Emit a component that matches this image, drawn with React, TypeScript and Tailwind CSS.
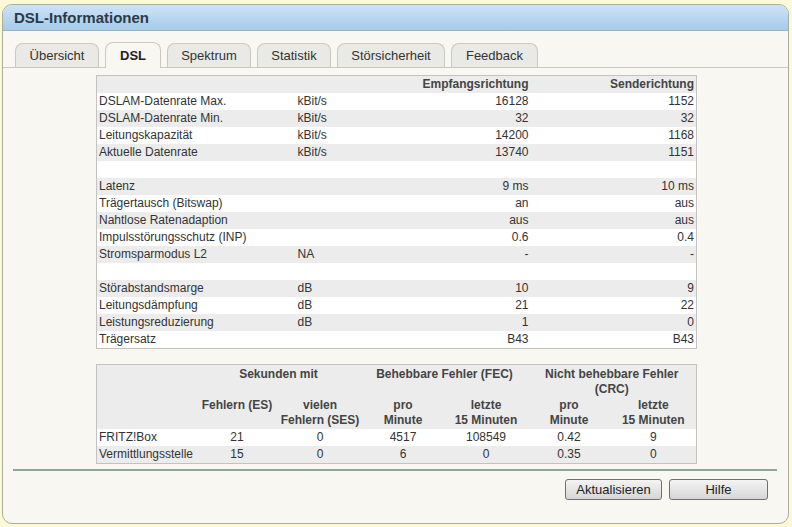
import React from "react";

const font = { fontFamily: '"Liberation Sans", Arial, sans-serif' };

type Row = { label: string; unit: string; rx: string; tx: string } | null;

const rows1: Row[] = [
  { label: "DSLAM-Datenrate Max.", unit: "kBit/s", rx: "16128", tx: "1152" },
  { label: "DSLAM-Datenrate Min.", unit: "kBit/s", rx: "32", tx: "32" },
  { label: "Leitungskapazität", unit: "kBit/s", rx: "14200", tx: "1168" },
  { label: "Aktuelle Datenrate", unit: "kBit/s", rx: "13740", tx: "1151" },
  null,
  { label: "Latenz", unit: "", rx: "9 ms", tx: "10 ms" },
  { label: "Trägertausch (Bitswap)", unit: "", rx: "an", tx: "aus" },
  { label: "Nahtlose Ratenadaption", unit: "", rx: "aus", tx: "aus" },
  { label: "Impulsstörungsschutz (INP)", unit: "", rx: "0.6", tx: "0.4" },
  { label: "Stromsparmodus L2", unit: "NA", rx: "-", tx: "-" },
  null,
  { label: "Störabstandsmarge", unit: "dB", rx: "10", tx: "9" },
  { label: "Leitungsdämpfung", unit: "dB", rx: "21", tx: "22" },
  { label: "Leistungsreduzierung", unit: "dB", rx: "1", tx: "0" },
  { label: "Trägersatz", unit: "", rx: "B43", tx: "B43" },
];

const tabs = [
  { name: "Übersicht", w: "w-[84px]" },
  { name: "DSL", w: "w-[56px]", active: true },
  { name: "Spektrum", w: "w-[84px]" },
  { name: "Statistik", w: "w-[74px]" },
  { name: "Störsicherheit", w: "w-[108px]" },
  { name: "Feedback", w: "w-[87px]" },
];

const errRows = [
  ["FRITZ!Box", "21", "0", "4517", "108549", "0.42", "9"],
  ["Vermittlungsstelle", "15", "0", "6", "0", "0.35", "0"],
];

export default function App() {
  return (
    <div className="w-[792px] h-[527px] bg-[#fcf9d6] pt-[4px] pl-[2px] text-[#333333]" style={font}>
      <div className="w-[787px] h-[520px] rounded-[10px] border border-[#a9ae9e] bg-[#f8f7f2] overflow-hidden flex flex-col">
        <div className="h-[26px] shrink-0 bg-gradient-to-b from-[#cde3f5] to-[#a6cbeb] border-b border-[#9db3c2] flex items-center pl-[11px]">
          <span className="text-[15px] font-bold text-[#2b3a48] leading-none">DSL-Informationen</span>
        </div>

        <div className="mt-[11px] flex items-end gap-[6px] pl-[12px] border-b border-[#c9c9c1] h-[26px] shrink-0">
          {tabs.map((t) =>
            t.active ? (
              <div
                key={t.name}
                className={`${t.w} h-[26px] -mb-px rounded-t-[8px] border border-b-0 border-[#c9c9c1] bg-[#f8f7f2] flex items-center justify-center text-[13px] font-bold text-[#222222]`}
              >
                {t.name}
              </div>
            ) : (
              <div
                key={t.name}
                className={`${t.w} h-[24px] rounded-t-[8px] border border-b-0 border-[#c9c9c1] bg-[#e9e9e5] flex items-center justify-center text-[13px] text-[#333333]`}
              >
                {t.name}
              </div>
            )
          )}
        </div>

        <div className="ml-[93px] mt-[7px]">
          <table className="w-[600px] table-fixed border-collapse border border-[#c2c2c2] text-[12px] leading-[17px]">
            <colgroup>
              <col className="w-[201px]" />
              <col className="w-[100px]" />
              <col className="w-[134px]" />
              <col className="w-[165px]" />
            </colgroup>
            <thead>
              <tr className="bg-[#ececec] h-[17px]">
                <th className="p-0" />
                <th className="p-0" />
                <th className="p-0 pr-[3px] text-right font-bold text-[#444444]">Empfangsrichtung</th>
                <th className="p-0 pr-[2px] text-right font-bold text-[#444444]">Senderichtung</th>
              </tr>
            </thead>
            <tbody>
              {rows1.map((r, i) => (
                <tr key={i} className={`h-[17px] ${i % 2 === 1 ? "bg-[#ececec]" : "bg-white"}`}>
                  <td className="p-0 pl-[2px] whitespace-nowrap">{r ? r.label : "\u00a0"}</td>
                  <td className="p-0">{r ? r.unit : ""}</td>
                  <td className="p-0 pr-[3px] text-right">{r ? r.rx : ""}</td>
                  <td className="p-0 pr-[2px] text-right">{r ? r.tx : ""}</td>
                </tr>
              ))}
            </tbody>
          </table>

          <table className="mt-[15px] w-[600px] table-fixed border-collapse border border-[#c2c2c2] text-[12px] leading-[17px]">
            <colgroup>
              <col className="w-[99px]" />
              <col className="w-[83px]" />
              <col className="w-[83px]" />
              <col className="w-[83px]" />
              <col className="w-[83px]" />
              <col className="w-[83px]" />
              <col className="w-[86px]" />
            </colgroup>
            <thead className="bg-[#ececec] text-[#444444] leading-[15px]">
              <tr className="h-[32px]">
                <th className="p-0" />
                <th colSpan={2} className="p-0 pt-[2px] align-top text-center font-bold">Sekunden mit</th>
                <th colSpan={2} className="p-0 pt-[2px] align-top text-center font-bold">Behebbare Fehler (FEC)</th>
                <th colSpan={2} className="p-0 pt-[2px] align-top text-center font-bold">
                  Nicht behebbare Fehler
                  <br />
                  (CRC)
                </th>
              </tr>
              <tr className="h-[32px]">
                <th className="p-0" />
                <th className="p-0 pt-[1px] align-top text-center font-bold">Fehlern (ES)</th>
                <th className="p-0 pt-[1px] align-top text-center font-bold">
                  vielen
                  <br />
                  Fehlern (SES)
                </th>
                <th className="p-0 pt-[1px] align-top text-center font-bold">
                  pro
                  <br />
                  Minute
                </th>
                <th className="p-0 pt-[1px] align-top text-center font-bold">
                  letzte
                  <br />
                  15 Minuten
                </th>
                <th className="p-0 pt-[1px] align-top text-center font-bold">
                  pro
                  <br />
                  Minute
                </th>
                <th className="p-0 pt-[1px] align-top text-center font-bold">
                  letzte
                  <br />
                  15 Minuten
                </th>
              </tr>
            </thead>
            <tbody>
              {errRows.map((r, i) => (
                <tr key={i} className={`h-[17px] ${i % 2 === 1 ? "bg-[#ececec]" : "bg-white"}`}>
                  {r.map((c, j) => (
                    <td key={j} className={`p-0 ${j === 0 ? "pl-[2px] text-left whitespace-nowrap" : "text-center"}`}>
                      {c}
                    </td>
                  ))}
                </tr>
              ))}
            </tbody>
          </table>
        </div>

        <div className="mt-[5px] ml-[10px] w-[764px] h-[2px] bg-[#8fa596]" />

        <div className="mt-[8px] flex justify-end gap-[7px] pr-[20px]">
          <button className="w-[97px] h-[21px] rounded-[3px] border border-[#707070] bg-gradient-to-b from-[#f4f4f4] to-[#d6d6d6] text-[13px] text-[#222222] leading-none">
            Aktualisieren
          </button>
          <button className="w-[99px] h-[21px] rounded-[3px] border border-[#707070] bg-gradient-to-b from-[#f4f4f4] to-[#d6d6d6] text-[13px] text-[#222222] leading-none">
            Hilfe
          </button>
        </div>
      </div>
    </div>
  );
}
